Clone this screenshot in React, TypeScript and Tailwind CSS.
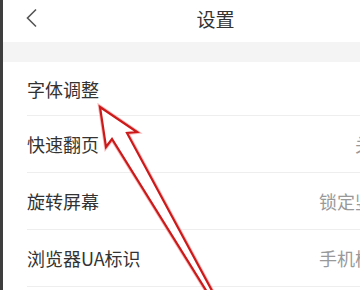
import React from "react";

const rows: { label: string; value?: string }[] = [
  { label: "字体调整" },
  { label: "快速翻页", value: "关闭" },
  { label: "旋转屏幕", value: "锁定竖屏" },
  { label: "浏览器UA标识", value: "手机模式" },
];

export default function App() {
  return (
    <div
      className="relative w-[360px] h-[290px] overflow-hidden bg-white"
      style={{ fontFamily: '"Noto Sans CJK SC", "Noto Sans", sans-serif' }}
    >
      <div className="flex items-start">
        <div className="w-[3px] h-[290px] shrink-0 bg-[#3e3e3e]" />
        <div className="w-[428px] shrink-0 flex flex-col">
          <div className="relative h-[42px] shrink-0 flex items-center justify-center">
            <svg
              className="absolute left-[22px] top-[8px]"
              width="14"
              height="20"
              viewBox="0 0 14 20"
            >
              <path d="M11 1.5 L2.5 10 L11 18.5" fill="none" stroke="#555" strokeWidth="1.6" />
            </svg>
            <span className="text-[19px] text-[#333] leading-none ml-[-3px] -mt-[6px]">设置</span>
          </div>
          <div className="h-[20px] shrink-0 bg-[#f4f4f4]" />
          {rows.map((r, i) => (
            <div
              key={r.label}
              className={`${i === 0 ? "h-[54px]" : "h-[57px]"} shrink-0 ml-[24px] mr-[40px] flex items-center justify-between border-b border-[#eeeeee]`}
            >
              <span className="text-[18px] text-[#333] leading-none">{r.label}</span>
              {r.value && (
                <span className="text-[18px] text-[#999] leading-none">{r.value}</span>
              )}
            </div>
          ))}
        </div>
      </div>
      <svg className="absolute left-0 top-0 pointer-events-none" width="360" height="290" viewBox="0 0 360 290">
        <polygon
          points="100,107 137,132 127,133 217,300 212,300 112,139 106,147"
          fill="white"
          stroke="#f06060"
          strokeOpacity="0.45"
          strokeWidth="4"
          strokeLinejoin="miter"
        />
        <polygon
          points="100,107 137,132 127,133 217,300 212,300 112,139 106,147"
          fill="white"
          stroke="#cc1a1a"
          strokeWidth="2.2"
          strokeLinejoin="miter"
        />
      </svg>
    </div>
  );
}
